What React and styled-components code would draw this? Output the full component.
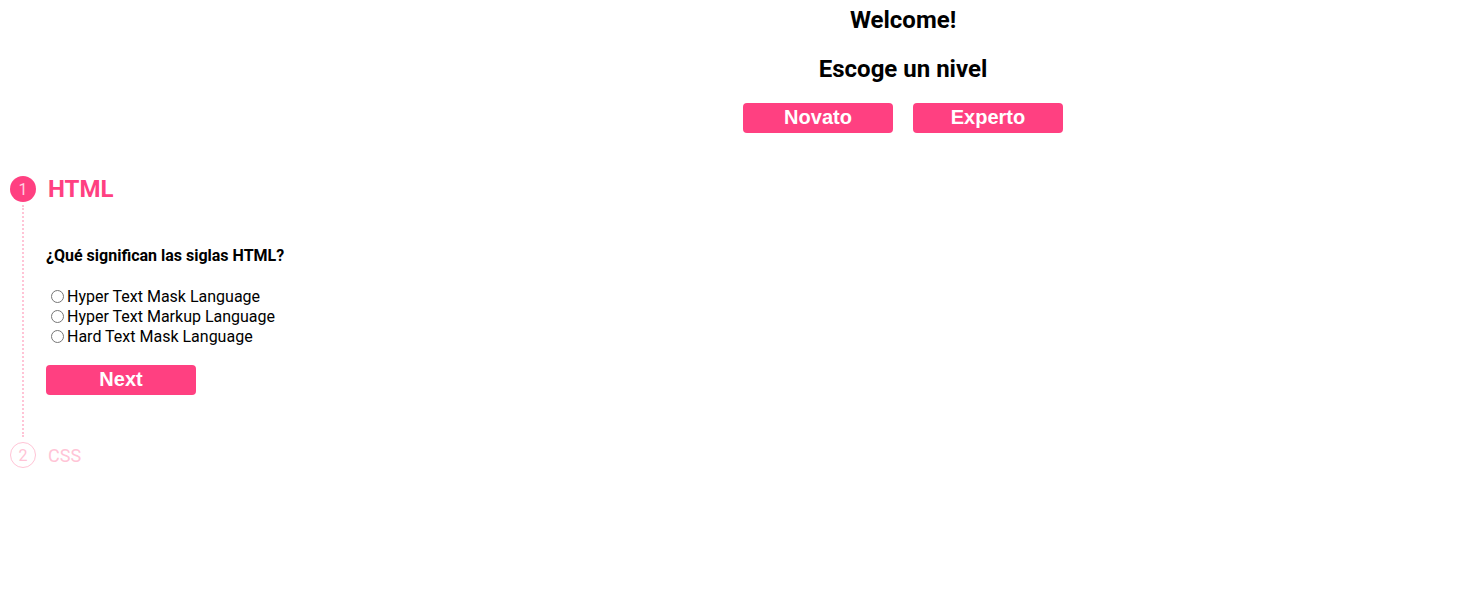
import styled, { createGlobalStyle } from "styled-components";

const PINK = "#ff4081";

const GlobalStyle = createGlobalStyle`
  body {
    margin: 0;
    background: #fff;
    font-family: Roboto, "Liberation Sans", sans-serif;
    color: #000;
  }
`;

const OPTIONS = [
  "Hyper Text Mask Language",
  "Hyper Text Markup Language",
  "Hard Text Mask Language",
];

const App = () => {
  return (
    <>
      <GlobalStyle />
      <Header>
        <Welcome>Welcome!</Welcome>
        <Subtitle>Escoge un nivel</Subtitle>
        <LevelRow>
          <PinkButton>Novato</PinkButton>
          <PinkButton>Experto</PinkButton>
        </LevelRow>
      </Header>

      <Stepper>
        <StepHead>
          <StepCircle $active>1</StepCircle>
          <StepLabel $active>HTML</StepLabel>
        </StepHead>
        <StepBody>
          <Question>¿Qué significan las siglas HTML?</Question>
          <OptionList>
            {OPTIONS.map((opt, index) => (
              <OptionLabel key={index}>
                <input type="radio" name="html" />
                {opt}
              </OptionLabel>
            ))}
          </OptionList>
          <PinkButton>Next</PinkButton>
        </StepBody>
        <StepHead>
          <StepCircle>2</StepCircle>
          <StepLabel>CSS</StepLabel>
        </StepHead>
      </Stepper>
    </>
  );
};

export default App;

const Header = styled.div`
  padding-left: 322px;
  padding-top: 6px;
  display: flex;
  flex-direction: column;
  align-items: center;
`;

const Welcome = styled.h2`
  margin: 0;
  font-size: 24px;
  font-weight: 700;
  line-height: 28px;
`;

const Subtitle = styled.h2`
  margin: 20px 0 0;
  font-size: 24px;
  font-weight: 700;
  line-height: 30px;
`;

const LevelRow = styled.div`
  display: flex;
  gap: 20px;
  margin-top: 19px;
`;

const PinkButton = styled.button`
  width: 150px;
  height: 30px;
  padding: 0 0 1px;
  border: none;
  border-radius: 4px;
  background: ${PINK};
  color: #fff;
  font-family: "Liberation Sans", Arial, sans-serif;
  font-size: 20px;
  font-weight: 700;
  cursor: pointer;
`;

const Stepper = styled.div`
  margin-top: 43px;
  padding-left: 10px;
`;

const StepHead = styled.div`
  display: flex;
  align-items: center;
  gap: 12px;
  height: 26px;
`;

const StepCircle = styled.div`
  width: 26px;
  height: 26px;
  box-sizing: border-box;
  border-radius: 50%;
  display: flex;
  align-items: center;
  justify-content: center;
  font-size: 16px;
  background: ${(p) => (p.$active ? PINK : "transparent")};
  color: ${(p) => (p.$active ? "#ffd1e0" : "#ffc4d6")};
  border: ${(p) => (p.$active ? "none" : "1px solid #ffc4d6")};
`;

const StepLabel = styled.span`
  font-size: ${(p) => (p.$active ? "24px" : "18px")};
  font-weight: ${(p) => (p.$active ? 700 : 400)};
  color: ${(p) => (p.$active ? PINK : "#ffc4d6")};
`;

const StepBody = styled.div`
  margin: 3px 0 5px 12px;
  padding: 41px 0 42px 22px;
  border-left: 2px dotted #ffc4d6;
`;

const Question = styled.p`
  margin: 0 0 21px;
  font-size: 16px;
  font-weight: 700;
  line-height: 20px;
`;

const OptionList = styled.div`
  display: flex;
  flex-direction: column;
  margin-bottom: 18px;
`;

const OptionLabel = styled.label`
  font-size: 16px;
  line-height: 20px;
  display: flex;
  align-items: center;

  input {
    margin: 0 3px 2px 5px;
    width: 13px;
    height: 13px;
  }
`;
